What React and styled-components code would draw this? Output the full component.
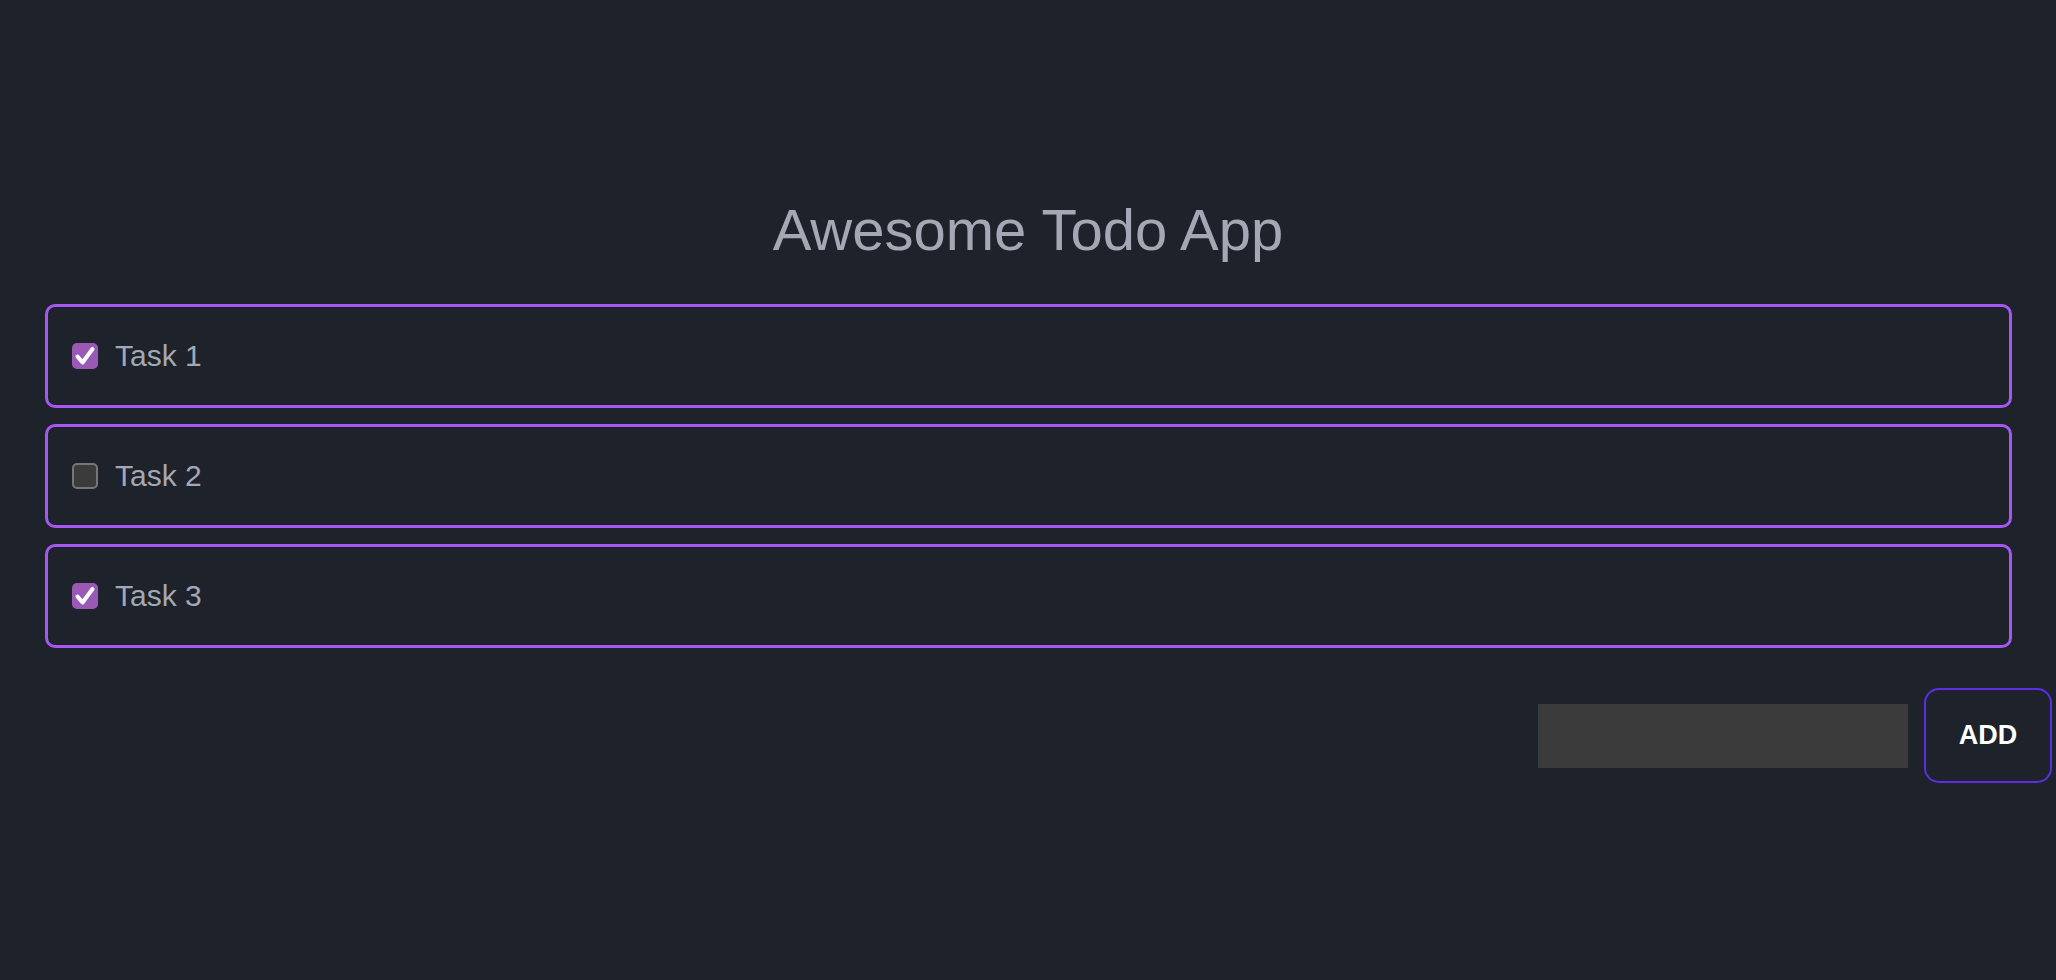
import React, { useState } from "react";
import styled, { createGlobalStyle } from "styled-components";

const GlobalStyle = createGlobalStyle`
  html, body {
    margin: 0;
    padding: 0;
    background: #1e222a;
  }
  body {
    font-family: "Liberation Sans", Arial, Helvetica, sans-serif;
  }
`;

const initialTodos = [
  { id: 1, title: "Task 1", done: true },
  { id: 2, title: "Task 2", done: false },
  { id: 3, title: "Task 3", done: true },
];

const App = () => {
  const [todos, setTodos] = useState(initialTodos);
  const [text, setText] = useState("");

  const toggleTodo = (id) => {
    setTodos(todos.map((t) => (t.id === id ? { ...t, done: !t.done } : t)));
  };

  const addTodo = (e) => {
    e.preventDefault();
    if (!text.trim()) return;
    setTodos([...todos, { id: Date.now(), title: text, done: false }]);
    setText("");
  };

  return (
    <Page>
      <GlobalStyle />
      <Title>Awesome Todo App</Title>
      <TodoList>
        {todos.map((todo) => (
          <TodoItem key={todo.id} onClick={() => toggleTodo(todo.id)}>
            <CheckBox $checked={todo.done}>
              {todo.done && (
                <svg width="26" height="26" viewBox="0 0 26 26">
                  <path
                    d="M5.5 13.5 L10.6 19.5 L20.5 6"
                    fill="none"
                    stroke="#fff"
                    strokeWidth="4"
                    strokeLinecap="round"
                    strokeLinejoin="round"
                  />
                </svg>
              )}
            </CheckBox>
            <TodoTitle>{todo.title}</TodoTitle>
          </TodoItem>
        ))}
      </TodoList>
      <AddForm onSubmit={addTodo}>
        <TodoInput value={text} onChange={(e) => setText(e.target.value)} />
        <AddButton type="submit">ADD</AddButton>
      </AddForm>
    </Page>
  );
};

const Page = styled.div`
  min-height: 100vh;
  box-sizing: border-box;
  padding-top: 201px;
  background: #1e222a;
  color: #a4a7b4;
`;

const Title = styled.h1`
  margin: 0 0 45px;
  font-size: 58px;
  font-weight: 400;
  line-height: 58px;
  text-align: center;
  color: #a4a7b4;
`;

const TodoList = styled.ul`
  display: flex;
  flex-direction: column;
  gap: 16px;
  margin: 0 44px 0 45px;
  padding: 0;
  list-style: none;
`;

const TodoItem = styled.li`
  display: flex;
  align-items: center;
  gap: 17px;
  height: 104px;
  box-sizing: border-box;
  padding: 0 24px;
  border: 3px solid #a657f2;
  border-radius: 10px;
  cursor: pointer;
`;

const CheckBox = styled.span`
  display: flex;
  align-items: center;
  justify-content: center;
  width: 26px;
  height: 26px;
  box-sizing: border-box;
  border-radius: 5px;
  background: ${({ $checked }) => ($checked ? "#9a59b5" : "#3b3b3b")};
  border: ${({ $checked }) => ($checked ? "none" : "2px solid #767676")};
  flex-shrink: 0;
`;

const TodoTitle = styled.span`
  font-size: 30px;
  color: #a4a7b4;
`;

const AddForm = styled.form`
  display: flex;
  align-items: center;
  justify-content: flex-end;
  gap: 16px;
  margin-top: 40px;
  padding-right: 4px;
`;

const TodoInput = styled.input`
  width: 370px;
  height: 64px;
  box-sizing: border-box;
  padding: 0 16px;
  border: none;
  outline: none;
  background: #3b3b3b;
  color: #e5e5e5;
  font-family: inherit;
  font-size: 24px;
`;

const AddButton = styled.button`
  width: 128px;
  height: 95px;
  box-sizing: border-box;
  border: 2px solid #5b2ee3;
  border-radius: 15px;
  background: transparent;
  color: #fff;
  font-family: inherit;
  font-size: 27px;
  font-weight: 700;
  cursor: pointer;
`;

export default App;
